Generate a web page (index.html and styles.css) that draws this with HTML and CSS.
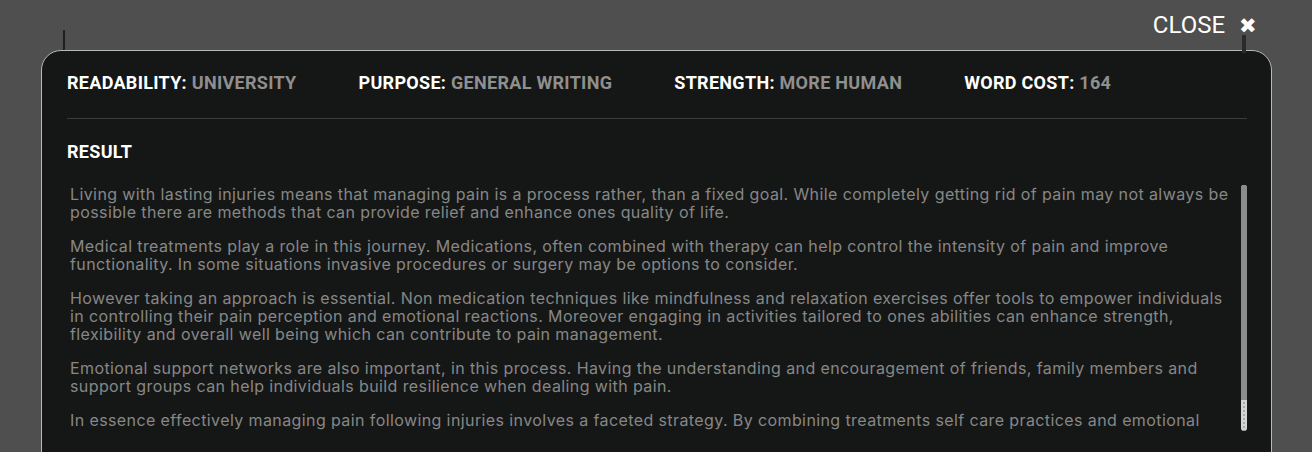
FILE: index.html
```html
<!DOCTYPE html>
<html lang="en">
<head>
    <meta charset="UTF-8">
    <meta name="viewport" content="width=device-width, initial-scale=1.0">
    <title>Humanizer Result</title>
    <link rel="stylesheet" href="styles.css">
</head>
<body>

<div class="topbar">
    <div class="page-edge"></div>
    <button class="close-btn">CLOSE <span class="close-icon">&#10006;</span></button>
</div>

<div class="modal">
    <div class="stats">
        <div class="stat"><span class="label">READABILITY:</span> <span class="value">UNIVERSITY</span></div>
        <div class="stat"><span class="label">PURPOSE:</span> <span class="value">GENERAL WRITING</span></div>
        <div class="stat"><span class="label">STRENGTH:</span> <span class="value">MORE HUMAN</span></div>
        <div class="stat"><span class="label">WORD COST:</span> <span class="value">164</span></div>
    </div>

    <h3 class="result-title">RESULT</h3>

    <div class="result-body">
        <div class="result-text">
            <p>Living with lasting injuries means that managing pain is a process rather, than a fixed goal. While completely getting rid of pain may not always be possible there are methods that can provide relief and enhance ones quality of life.</p>
            <p>Medical treatments play a role in this journey. Medications, often combined with therapy can help control the intensity of pain and improve functionality. In some situations invasive procedures or surgery may be options to consider.</p>
            <p>However taking an approach is essential. Non medication techniques like mindfulness and relaxation exercises offer tools to empower individuals in controlling their pain perception and emotional reactions. Moreover engaging in activities tailored to ones abilities can enhance strength, flexibility and overall well being which can contribute to pain management.</p>
            <p>Emotional support networks are also important, in this process. Having the understanding and encouragement of friends, family members and support groups can help individuals build resilience when dealing with pain.</p>
            <p>In essence effectively managing pain following injuries involves a faceted strategy. By combining treatments self care practices and emotional support individuals can regain control and lead fulfilling lives despite their injuries.</p>
        </div>
        <div class="scrollbar">
            <div class="scrollbar-thumb"></div>
        </div>
    </div>
</div>

</body>
</html>
```

FILE: styles.css
```css
body {
    margin: 0;
    background-color: #4f4f4f;
    font-family: "Inter", "Noto Sans", sans-serif;
    height: 452px;
    overflow: hidden;
}

.topbar {
    height: 50px;
    display: flex;
    justify-content: space-between;
    align-items: flex-start;
    padding: 0 55px 0 63px;
    box-sizing: border-box;
}

.page-edge {
    margin-top: 30px;
    width: 2px;
    height: 20px;
    background-color: #1e1e1e;
}

.close-btn {
    margin-top: 11px;
    padding: 0;
    background: none;
    border: none;
    color: #ffffff;
    font-family: "Roboto", "Liberation Sans", sans-serif;
    font-size: 24px;
    line-height: 28px;
    cursor: pointer;
}

.close-icon {
    position: relative;
    margin-left: 8px;
    font-size: 21px;
}

/* little shadow strip under the x */
.close-icon::after {
    content: "";
    position: absolute;
    left: 3px;
    top: 21px;
    width: 4px;
    height: 18px;
    background-color: #2a2a2a;
}

.modal {
    margin: 0 40px 0 41px;
    border: 1px solid #b8b8b8;
    border-radius: 20px;
    background-color: #151716;
    padding: 0 24px 0 25px;
    height: 420px;
}

.stats {
    display: flex;
    gap: 62px;
    padding: 21px 0 25px;
    border-bottom: 1px solid #3a3c3b;
    font-family: "Roboto", sans-serif;
    font-weight: 700;
    font-size: 18px;
    line-height: 21px;
    letter-spacing: 0.3px;
}

.label {
    color: #ffffff;
}

.value {
    color: #8f8f8f;
}

.result-title {
    margin: 0;
    padding: 22px 0 0;
    font-family: "Roboto", sans-serif;
    font-weight: 700;
    font-size: 18px;
    line-height: 21px;
    letter-spacing: 0.3px;
    color: #ffffff;
}

.result-body {
    display: flex;
    margin-top: 23px;
    height: 246px;
}

.result-text {
    flex: 1;
    overflow: hidden;
    padding: 0 10px 0 3px;
    color: #878787;
    font-size: 16px;
    line-height: 18px;
    letter-spacing: 0.4px;
}

.result-text p {
    margin: 0 0 16px;
}

.scrollbar {
    width: 6px;
    border-radius: 3px;
    background-color: #d4d4d4;
    background-image: radial-gradient(circle, #a8a8a8 0.7px, transparent 1px);
    background-size: 6px 4px;
}

.scrollbar-thumb {
    height: 215px;
    border-radius: 3px 3px 0 0;
    background-color: #8c8c8c;
}
```
